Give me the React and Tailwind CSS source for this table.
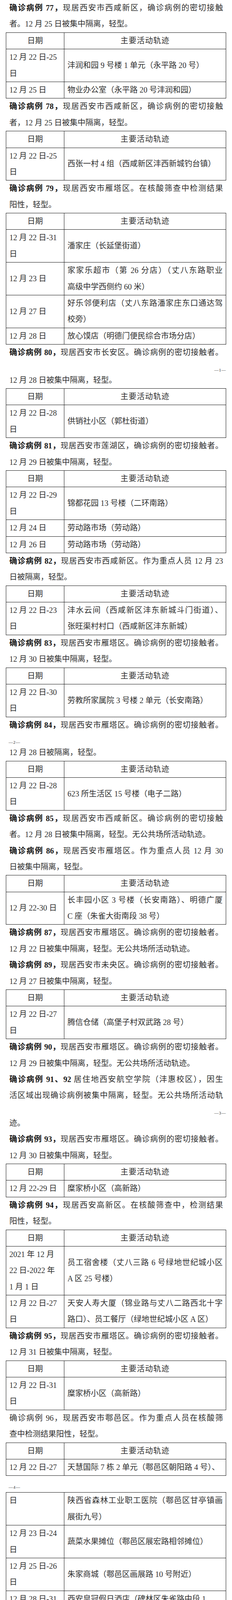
import React from "react";

const LINE = "h-[41.4px] leading-[41.4px]";
const JUST = "text-justify [text-align-last:justify]";

// page content, in reading order. p = paragraph, t = table, pg = page break
const DOC = [
  { k: "p", b: "确诊病例 77，", l: ["现居西安市西咸新区，确诊病例的密切接触", "者。12 月 25 日被集中隔离，轻型。"] },
  {
    k: "t",
    rows: [
      { d: ["12 月 22 日-25", "日"], a: ["沣润和园 9 号楼 1 单元（永平路 20 号）"] },
      { d: ["12 月 25 日"], a: ["物业办公室（永平路 20 号沣润和园）"] },
    ],
  },
  { k: "p", b: "确诊病例 78，", l: ["现居西安市西咸新区，确诊病例的密切接触", "者，12 月 25 日被集中隔离，轻型。"] },
  { k: "t", rows: [{ d: ["12 月 22 日-25", "日"], a: ["西张一村 4 组（西咸新区沣西新城钓台镇）"] }] },
  { k: "p", b: "确诊病例 79，", l: ["现居西安市雁塔区。在核酸筛查中检测结果", "阳性，轻型。"] },
  {
    k: "t",
    rows: [
      { d: ["12 月 22 日-31", "日"], a: ["潘家庄（长延堡街道）"] },
      { d: ["12 月 23 日"], a: ["家家乐超市（第 26 分店）（丈八东路职业", "高级中学西侧约 60 米）"] },
      { d: ["12 月 27 日"], a: ["好乐邻便利店（丈八东路潘家庄东口通达驾", "校旁）"] },
      { d: ["12 月 28 日"], a: ["放心馍店（明德门便民综合市场分店）"] },
    ],
  },
  { k: "p", b: "确诊病例 80，", l: ["现居西安市长安区。确诊病例的密切接触者。"], full: 1 },
  { k: "pg", n: 1, right: true },

  { k: "p", l: ["12 月 28 日被集中隔离，轻型。"] },
  { k: "t", rows: [{ d: ["12 月 22 日-28", "日"], a: ["供销社小区（郭杜街道）"] }] },
  { k: "p", b: "确诊病例 81，", l: ["现居西安市莲湖区，确诊病例的密切接触者。", "12 月 29 日被集中隔离，轻型。"] },
  {
    k: "t",
    rows: [
      { d: ["12 月 22 日-29", "日"], a: ["锦都花园 13 号楼（二环南路）"] },
      { d: ["12 月 24 日"], a: ["劳动路市场（劳动路）"] },
      { d: ["12 月 26 日"], a: ["劳动路市场（劳动路）"] },
    ],
  },
  { k: "p", b: "确诊病例 82，", l: ["现居西安市西咸新区。作为重点人员 12 月 23", "日被隔离，轻型。"] },
  {
    k: "t",
    rows: [{ d: ["12 月 22 日-23", "日"], a: ["沣水云间（西咸新区沣东新城斗门街道）、", "张旺渠村村口（西咸新区沣东新城）"] }],
  },
  { k: "p", b: "确诊病例 83，", l: ["现居西安市雁塔区。确诊病例的密切接触者。", "12 月 30 日被集中隔离，轻型。"] },
  { k: "t", rows: [{ d: ["12 月 22 日-30", "日"], a: ["劳教所家属院 3 号楼 2 单元（长安南路）"] }] },
  { k: "p", b: "确诊病例 84，", l: ["现居西安市雁塔区。确诊病例的密切接触者。"], full: 1 },
  { k: "pg", n: 2 },

  { k: "p", l: ["12 月 28 日被隔离，轻型。"] },
  { k: "t", rows: [{ d: ["12 月 22 日-28", "日"], a: ["623 所生活区 15 号楼（电子二路）"] }] },
  { k: "p", b: "确诊病例 85，", l: ["现居西安市西咸新区。确诊病例的密切接触", "者。12 月 28 日被集中隔离，轻型。无公共场所活动轨迹。"] },
  { k: "p", b: "确诊病例 86，", l: ["现居西安市雁塔区。作为重点人员 12 月 30", "日被集中隔离，轻型。"] },
  {
    k: "t",
    rows: [{ d: ["12 月 22-30 日"], a: ["长丰园小区 3 号楼（长安南路）、明德广厦", "C 座（朱雀大街南段 38 号）"] }],
  },
  { k: "p", b: "确诊病例 87，", l: ["现居西安市雁塔区。确诊病例的密切接触者。", "12 月 22 日被集中隔离，轻型。无公共场所活动轨迹。"] },
  { k: "p", b: "确诊病例 89，", l: ["现居西安市未央区。确诊病例的密切接触者。", "12 月 27 日被集中隔离，轻型。"] },
  { k: "t", rows: [{ d: ["12 月 22 日-27", "日"], a: ["腾信仓储（高堡子村双武路 28 号）"] }] },
  { k: "p", b: "确诊病例 90，", l: ["现居西安市雁塔区。确诊病例的密切接触者。", "12 月 29 日被集中隔离，轻型。无公共场所活动轨迹。"] },
  {
    k: "p",
    b: "确诊病例 91、92",
    l: [" 居住地西安航空学院（沣惠校区），因生", "活区域出现确诊病例被集中隔离，轻型。无公共场所活动轨"],
    full: 2,
  },
  { k: "pg", n: 3, right: true },

  { k: "p", l: ["迹。"] },
  { k: "p", b: "确诊病例 93，", l: ["现居西安市雁塔区。确诊病例的密切接触者。", "12 月 30 日被集中隔离，轻型。"] },
  { k: "t", rows: [{ d: ["12 月 22-29 日"], a: ["糜家桥小区（高新路）"] }] },
  { k: "p", b: "确诊病例 94，", l: ["现居西安高新区。在核酸筛查中，检测结果", "阳性，轻型。"] },
  {
    k: "t",
    rows: [
      { d: ["2021 年 12 月", "22 日-2022 年", "1 月 1 日"], a: ["员工宿舍楼（丈八三路 6 号绿地世纪城小区", "A 区 25 号楼）"] },
      { d: ["12 月 22 日-27", "日"], a: ["天安人寿大厦（锦业路与丈八二路西北十字", "路口）、员工餐厅（绿地世纪城小区 A 区）"] },
    ],
  },
  { k: "p", b: "确诊病例 95，", l: ["现居西安市雁塔区。确诊病例的密切接触者。", "12 月 31 日被集中隔离，轻型。"] },
  { k: "t", rows: [{ d: ["12 月 22 日-31", "日"], a: ["糜家桥小区（高新路）"] }] },
  { k: "p", b: "确诊病例 96，", plain: true, l: ["现居西安市鄠邑区。作为重点人员在核酸筛", "查中检测结果阳性，轻型。"] },
  { k: "t", rows: [{ d: ["12 月 22 日-27"], a: ["天慧国际 7 栋 2 单元（鄠邑区朝阳路 4 号）、"] }] },
  { k: "pg", n: 4, toTable: true },

  {
    k: "t",
    noHead: true,
    rows: [
      { d: ["日"], a: ["陕西省森林工业职工医院（鄠邑区甘亭镇画", "展街九号）"], top: true },
      { d: ["12 月 23 日-24", "日"], a: ["蔬菜水果摊位（鄠邑区展宏路相邻摊位）"] },
      { d: ["12 月 25 日-26", "日"], a: ["朱家商城（鄠邑区画展路 10 号附近）"] },
      { d: ["12 月 28 日-31", "日"], a: ["西安皇冠假日酒店（碑林区朱雀路中段 1", "号）"], loose: true },
      { d: ["12 月 28 日"], a: ["朱家商城（鄠邑区画展路 10 号附近）"] },
    ],
  },
  { k: "p", b: "确诊病例 97，", l: ["现居西安市雁塔区。确诊病例的密切接触者。", "12 月 31 日被集中隔离，轻型。"] },
  { k: "t", rows: [{ d: ["12 月 22 日-30", "日"], a: ["瓦胡同西区 8 号楼 2 单元（翠华南路）"] }] },
  {
    k: "p",
    b: "确诊病例 98-99、102",
    l: [" 现居西安市雁塔区陕西工商职业技术", "学院明德校区（丈八东路 9 号）。确诊病例的密切接触者。", "集中隔离人员，轻型。无公共场所活动轨迹。"],
  },
  { k: "p", b: "确诊病例 100，", l: ["现居西安市雁塔区。因工作区域出现确诊病", "例，12 月 26 日被集中隔离，轻型。"] },
  { k: "t", rows: [{ d: ["12 月 22 日-25", "日"], a: ["西安日报社小区 1 单元（太白南路 373 号）"] }] },
  { k: "pg", n: 5, right: true },

  { k: "p", b: "确诊病例 103，", l: ["现居西安市雁塔区，系确诊病例的密切接触", "者。12 月 27 日被集中隔离，轻型。"] },
  { k: "t", rows: [{ d: ["12 月 23 日-29", "日"], a: ["陕西工商职业学院（郭杜北街 41 号）"] }] },
  { k: "p", b: "确诊病例 107，", l: ["现居西安市雁塔区，系确诊病例的密切接触", "者。1 月 1 日被集中隔离，轻型。"] },
  {
    k: "t",
    rows: [
      { d: ["12 月 23 日-31", "日"], a: ["东仪小区 63 号（东仪路）"] },
      { d: ["12 月 26 日"], a: ["明德庭院小区门口北门摊位（明德西路与明", "德南巷交叉路口向西南约 150 米）"] },
    ],
  },
  { k: "p", b: "确诊病例 108，", l: ["现居西安高新区，系确诊病例的密切接触者。", "12 月 26 日被隔离，轻型。"] },
  { k: "t", rows: [{ d: ["12 月 26 日-30", "日"], a: ["长安区上林苑一路与西部大道公厕管理站"] }] },
  { k: "p", b: "确诊病例 109，", l: ["现居西安市西咸新区沣东新城，系确诊病例", "的密切接触者。12 月 26 日被集中隔离，轻型。"] },
  { k: "t", rows: [{ d: ["12 月 23 日-26", "日"], a: ["启航佳苑 B 区 16 号楼"] }] },
  { k: "pg", n: 6, toTable: true },

  { k: "t", noHead: true, rows: [{ d: ["12 月 23 日、", "25 日"], a: ["启航佳苑 B 区鹏龙超市"] }] },
  {
    k: "p",
    b: "确诊病例 110，",
    l: ["现居西安市西咸新区沣东新城，系确诊病例", "的密切接触者。12 月 22 日被集中隔离，轻型。无公共场所", "活动轨迹。"],
  },
  { k: "p", b: "确诊病例 111，", l: ["现居西安市雁塔区。因生活区域出现确诊病", "例，12 月 27 日被隔离，轻型。"] },
  { k: "t", rows: [{ d: ["12 月 23 日-27", "日"], a: ["翰骊国际 C 栋（等驾坡街道幸福南路 1 号）"] }] },
  { k: "p", b: "确诊病例 112，", l: ["现居西安市雁塔区，系确诊病例的密切接触", "者。2022 年 1 月 1 日被集中隔离，轻型。"] },
  { k: "t", rows: [{ d: ["2021 年 12 月", "23 日-2022 年", "1 月 1 日"], a: ["东仪福利区 63 号楼(东仪厂家属院)"] }] },
  { k: "p", b: "确诊病例 113-114，", plain: true, l: ["均现居碑林区。因生活区域出现确诊病", "例，12 月 24 日被隔离，轻型。"] },
  { k: "t", rows: [{ d: ["12 月 23 日-31", "日"], a: ["阳光里小区 10 号楼（建国路玄风桥四号）"] }] },
  { k: "p", b: "确诊病例 115，", l: ["现居西安市碑林区。因生活区域出现确诊病"], full: 1 },
  { k: "pg", n: 7, right: true },

  { k: "p", l: ["例，12 月 24 日被隔离，轻型。"] },
  {
    k: "t",
    rows: [
      { d: ["12 月 23 日"], a: ["松林超市(柏树林街道东四道巷 15 号)"] },
      { d: ["12 月 23 日-30", "日"], a: ["阳光里小区（柏树林街道）"] },
      { d: ["12 月 24 日"], a: ["刻章复印店(建国路和南社区)"] },
    ],
  },
  { k: "p", b: "确诊病例 116，", l: ["现居西安市国际港务区，系确诊病例的密切", "接触者。12 月 24 日被集中隔离，轻型。"] },
  { k: "t", rows: [{ d: ["12 月 23 日"], a: ["华东超市（华东购物广场港兴四路店）、物", "美购物广场（港兴四路店）"] }] },
  { k: "p", b: "确诊病例 117，", l: ["现居西安市长安区，作为重点人员 12 月 20", "日被集中隔离，轻型。"] },
  { k: "t", rows: [{ d: ["12 月 23 日", "-2022 年 1 月 1", "日"], a: ["甫店村一组（子午街道）"] }] },
  {
    k: "p",
    b: "确诊病例 118-121，",
    l: ["现居西安高新区邓店村 11 排 8 号，系", "确诊病例的密切接触者。集中隔离管控人员，轻型。均无公", "共场所活动轨迹。"],
  },
  { k: "p", b: "确诊病例 122，", l: ["现居西安市西咸新区。因生活区域出现确诊", "病例，12 月 24 日被隔离，轻型。"] },
  { k: "pg", n: 8, toTable: true },

  { k: "t", rows: [{ d: ["12 月 23 日", "-2022 年 1 月 1", "日"], a: ["加贝花园 12 号楼 A 座"] }] },
];

function Para({ b, l, full, plain }) {
  const nJust = full ?? l.length - 1;
  return (
    <div className="ml-[24px] mr-[23px]">
      {l.map((line, i) => (
        <div key={i} className={`${LINE} ${i < nJust ? JUST : ""}`}>
          {i === 0 && b ? <span className={plain ? "" : "font-bold text-[#161616]"}>{b}</span> : null}
          {line}
        </div>
      ))}
    </div>
  );
}

const CELL = "border border-[#141414] px-2 py-0";

function Table({ rows, noHead }) {
  return (
    <table className="ml-[15px] w-[565px] table-fixed border-collapse">
      <colgroup>
        <col className="w-[149px]" />
        <col />
      </colgroup>
      <tbody>
        {!noHead ? (
          <tr>
            <td className={`${CELL} text-center`}>
              <div className={LINE}>日期</div>
            </td>
            <td className={`${CELL} text-center`}>
              <div className={`${LINE} tracking-[1px]`}>主要活动轨迹</div>
            </td>
          </tr>
        ) : null}
        {rows.map((r, i) => (
          <tr key={i}>
            <td className={`${CELL} ${r.top ? "align-top" : "align-middle"}`}>
              {r.d.map((line, j) => (
                <div key={j} className={`${LINE} whitespace-nowrap`}>
                  {line}
                </div>
              ))}
            </td>
            <td className={`${CELL} align-middle`}>
              {r.a.map((line, j) => (
                <div
                  key={j}
                  className={`${LINE} ${j < r.a.length - 1 && !r.loose ? JUST : "whitespace-nowrap"}`}
                >
                  {line}
                </div>
              ))}
            </td>
          </tr>
        ))}
      </tbody>
    </table>
  );
}

function PageNo({ n, right, toTable }) {
  return (
    <div
      className={`flex ${toTable ? "h-[42px] items-start pt-[24px]" : "h-[29px] items-end"} ${
        right ? "justify-end pr-[15px]" : "justify-start pl-[22px]"
      }`}
    >
      <span className="text-[11px] leading-[11px] tracking-[1px] text-[#2a2a2a]">—{n}—</span>
    </div>
  );
}

export default function App() {
  return (
    <div className="w-[595px] bg-white text-[20px] text-[#2f2f2f] [font-family:'Liberation_Serif','Noto_Sans_CJK_SC',serif]">
      {DOC.map((blk, i) => {
        if (blk.k === "p") return <Para key={i} {...blk} />;
        if (blk.k === "t") return <Table key={i} rows={blk.rows} noHead={blk.noHead} />;
        return <PageNo key={i} n={blk.n} right={blk.right} toTable={blk.toTable} />;
      })}
    </div>
  );
}
